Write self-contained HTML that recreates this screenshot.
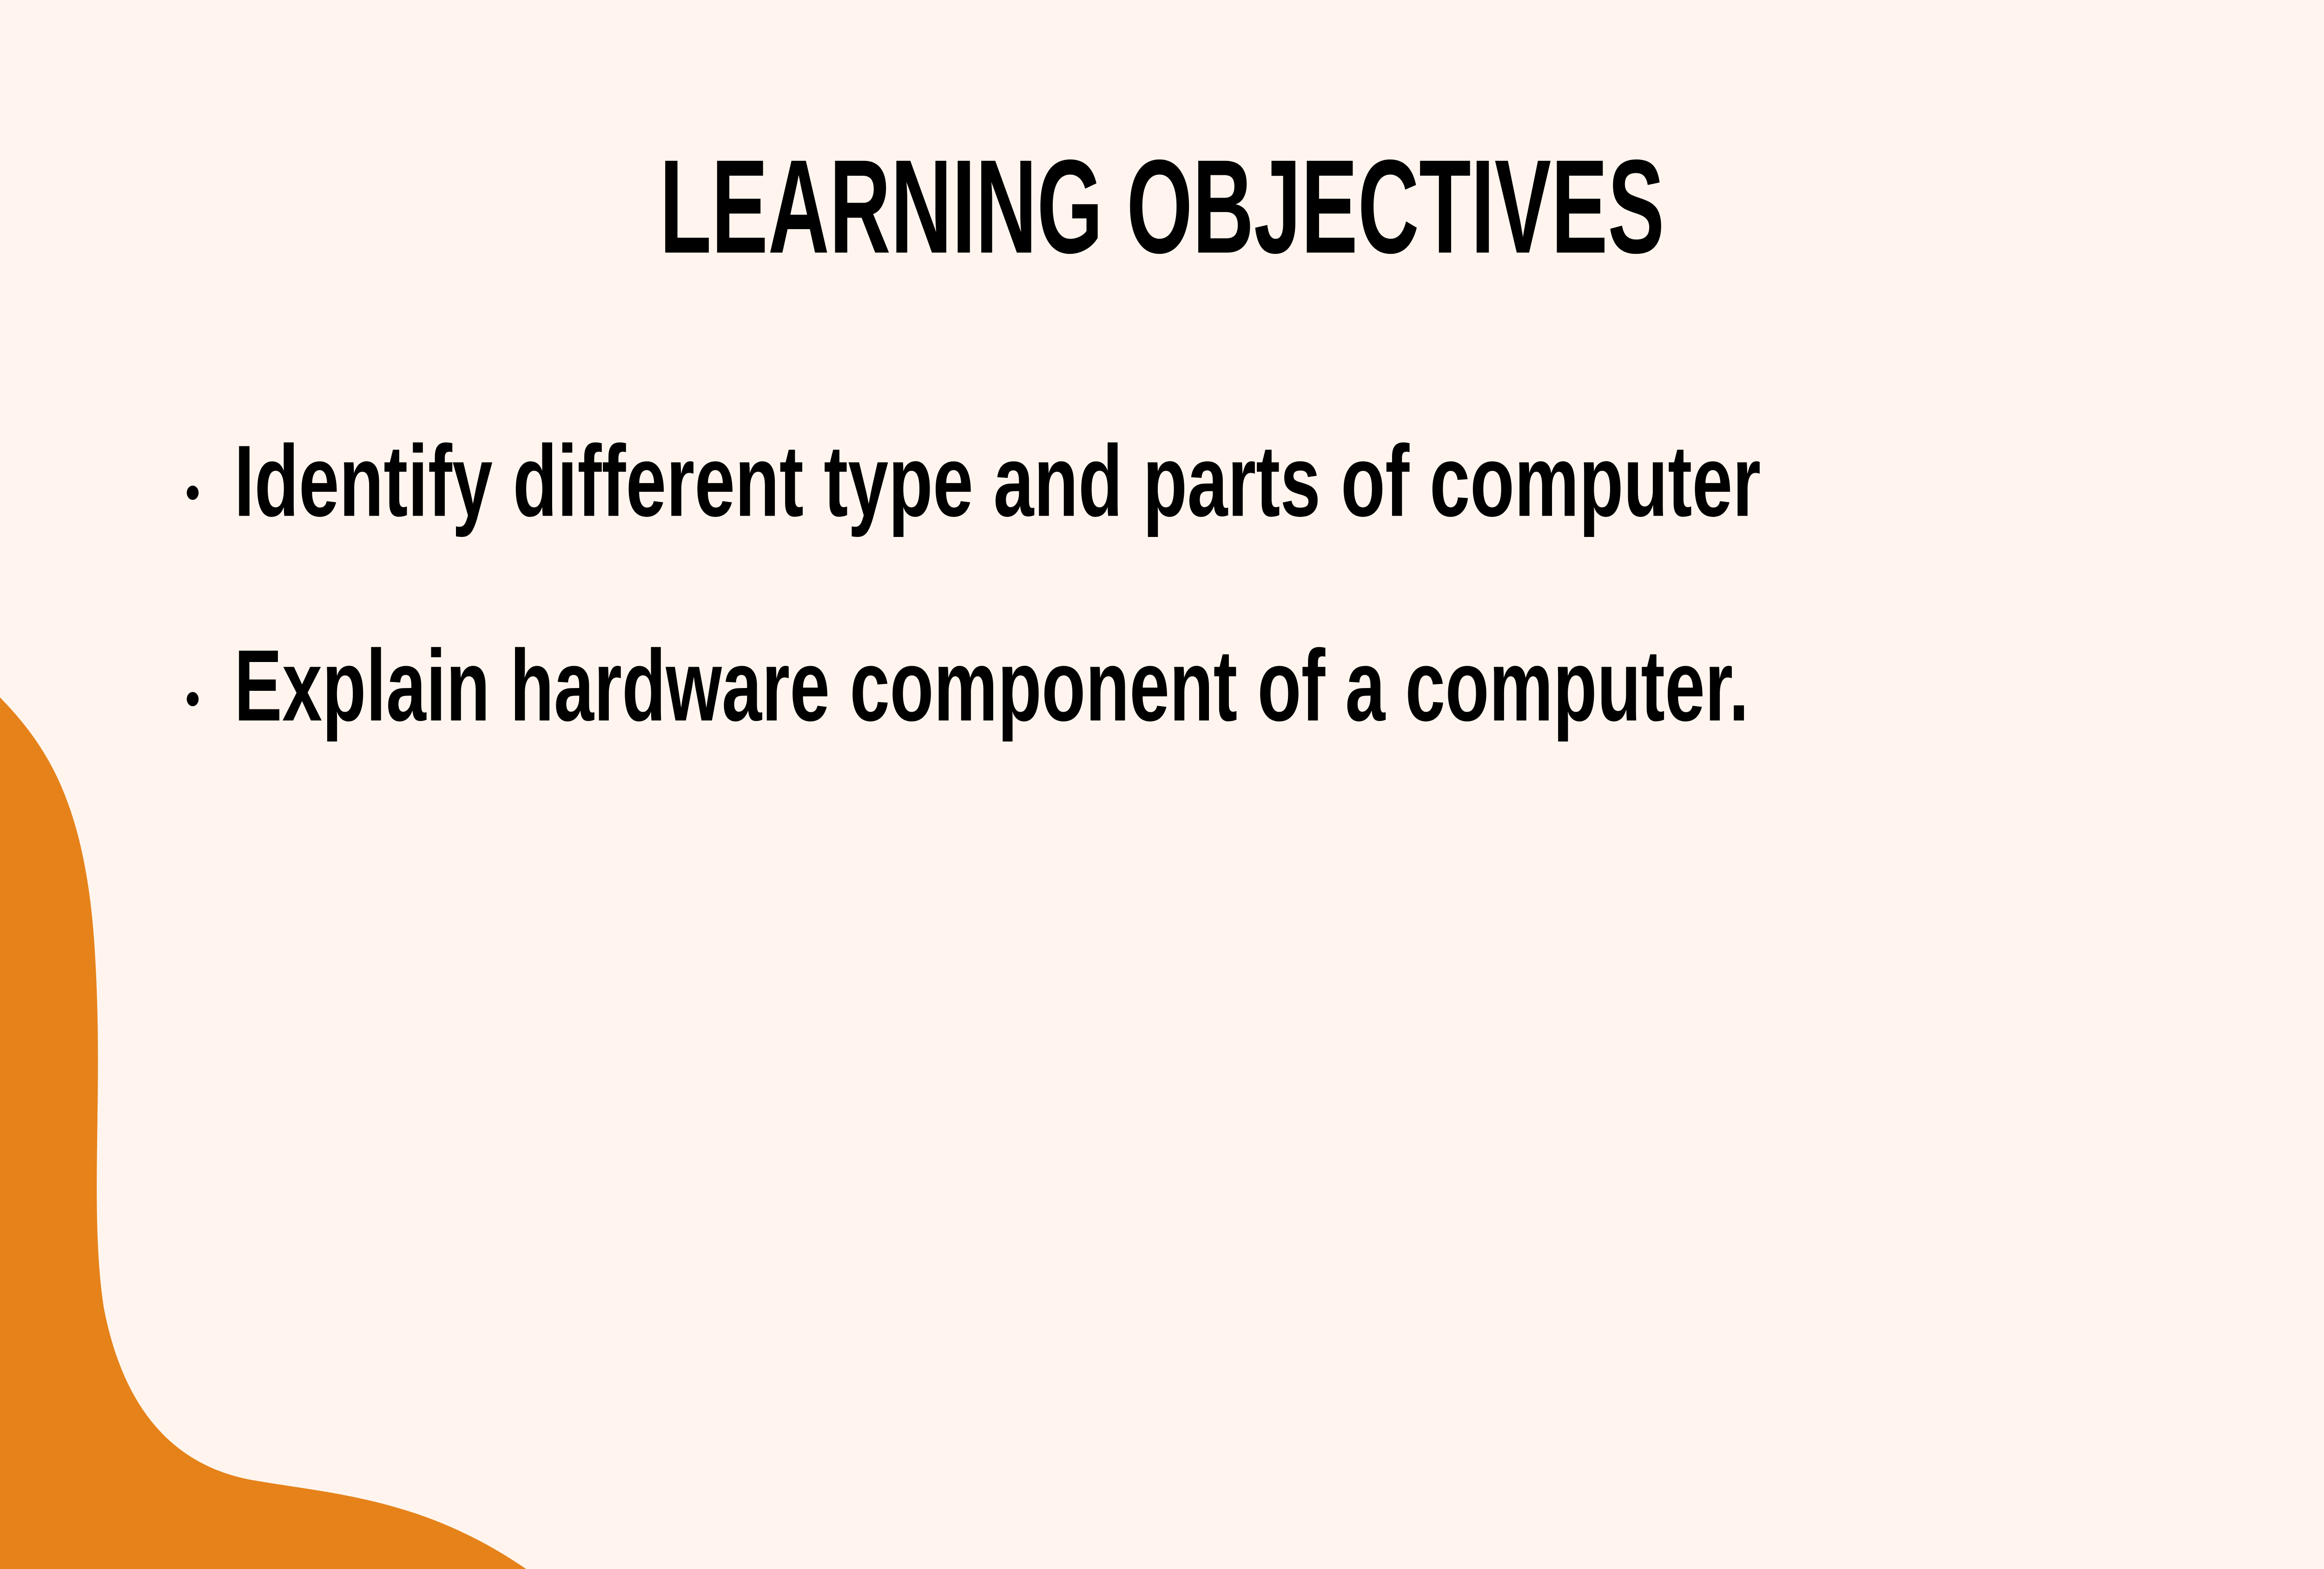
<!DOCTYPE html>
<html><head><meta charset="utf-8"><style>
html,body{margin:0;padding:0;width:100%;height:100%;overflow:hidden;background:#FFF5EE;}
svg{display:block;position:fixed;left:0;top:0;width:100vw;height:100vh;}
</style></head><body>
<svg viewBox="0 0 1568 882" preserveAspectRatio="none" xmlns="http://www.w3.org/2000/svg">
<rect width="1568" height="882" fill="#FFF5EE"/>
<path d="M0,392 C30,418 58,450 64,535 C70,615 60,680 70,735 C85,800 125,825 170,832 C225,840 285,842 355,882 L0,882 Z" fill="#E6821A"/>
<text x="445" y="142" font-family="Liberation Sans, sans-serif" font-weight="bold" font-size="75" textLength="678" lengthAdjust="spacingAndGlyphs" fill="#000">LEARNING OBJECTIVES</text>
<circle cx="130" cy="277" r="4" fill="#000"/>
<circle cx="130" cy="393" r="4" fill="#000"/>
<text x="158" y="290" font-family="Liberation Sans, sans-serif" font-weight="bold" font-size="57" textLength="1030" lengthAdjust="spacingAndGlyphs" fill="#000">Identify different type and parts of computer</text>
<text x="158" y="405" font-family="Liberation Sans, sans-serif" font-weight="bold" font-size="57" textLength="1022" lengthAdjust="spacingAndGlyphs" fill="#000">Explain hardware component of a computer.</text>
</svg>
</body></html>
